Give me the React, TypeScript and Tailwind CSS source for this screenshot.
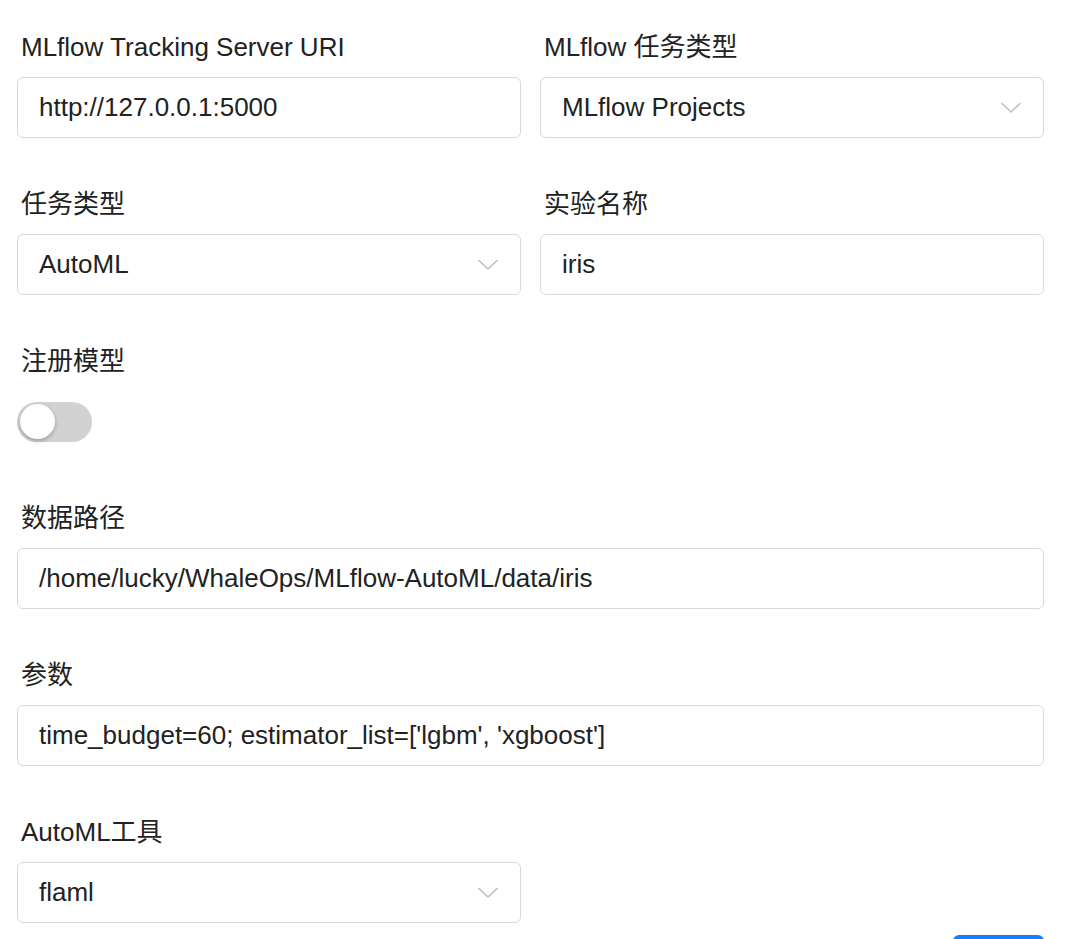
const font = "font-['Liberation_Sans','Noto_Sans_CJK_SC',sans-serif]";

function Label({ children }: { children: React.ReactNode }) {
    return (
        <div className="h-[36px] mb-[12px] pl-[4px] flex items-center text-[26px] leading-[36px] text-[#222]">
            {children}
        </div>
    );
}

function TextBox({ value }: { value: string }) {
    return (
        <div className="h-[61px] flex items-center px-[21px] border border-[#d9d9d9] rounded-[6px] bg-white text-[26px] text-[#222] whitespace-nowrap overflow-hidden">
            {value}
        </div>
    );
}

function Chevron() {
    return (
        <svg width="20" height="12" viewBox="0 0 20 12" fill="none" className="shrink-0">
            <path d="M1 1.5 L10 10 L19 1.5" stroke="#bfbfbf" strokeWidth="1.6" strokeLinecap="round" strokeLinejoin="round" />
        </svg>
    );
}

function SelectBox({ value }: { value: string }) {
    return (
        <div className="h-[61px] flex items-center justify-between pl-[21px] pr-[22px] border border-[#d9d9d9] rounded-[6px] bg-white text-[26px] text-[#222] whitespace-nowrap">
            <span>{value}</span>
            <Chevron />
        </div>
    );
}

function Field({ label, children }: { label: string; children: React.ReactNode }) {
    return (
        <div className="mb-[48px]">
            <Label>{label}</Label>
            {children}
        </div>
    );
}

export default function App() {
    return (
        <div className={`${font} bg-white w-[1080px] h-[939px] overflow-hidden pt-[29px] pl-[17px] pr-[36px]`}>
            <div className="grid grid-cols-2 gap-x-[19px]">
                <Field label="MLflow Tracking Server URI">
                    <TextBox value="http://127.0.0.1:5000" />
                </Field>
                <Field label="MLflow 任务类型">
                    <SelectBox value="MLflow Projects" />
                </Field>
                <Field label="任务类型">
                    <SelectBox value="AutoML" />
                </Field>
                <Field label="实验名称">
                    <TextBox value="iris" />
                </Field>
            </div>

            <Field label="注册模型">
                <div className="h-[61px] flex items-center">
                    {/* switch, unchecked */}
                    <div className="w-[75px] h-[40px] rounded-full bg-[#d2d2d2] flex items-center pl-[3px]">
                        <div className="w-[35px] h-[35px] rounded-full bg-white shadow-[0_2px_4px_rgba(0,0,0,0.25)]" />
                    </div>
                </div>
            </Field>

            <Field label="数据路径">
                <TextBox value="/home/lucky/WhaleOps/MLflow-AutoML/data/iris" />
            </Field>

            <Field label="参数">
                <TextBox value="time_budget=60; estimator_list=['lgbm', 'xgboost']" />
            </Field>

            <div className="grid grid-cols-2 gap-x-[19px]">
                <div>
                    <Label>AutoML工具</Label>
                    <SelectBox value="flaml" />
                </div>
            </div>

            <div className="flex justify-end mt-[12px]">
                <div className="w-[91px] h-[48px] rounded-[6px] bg-[#1a7dff]" />
            </div>
        </div>
    );
}
